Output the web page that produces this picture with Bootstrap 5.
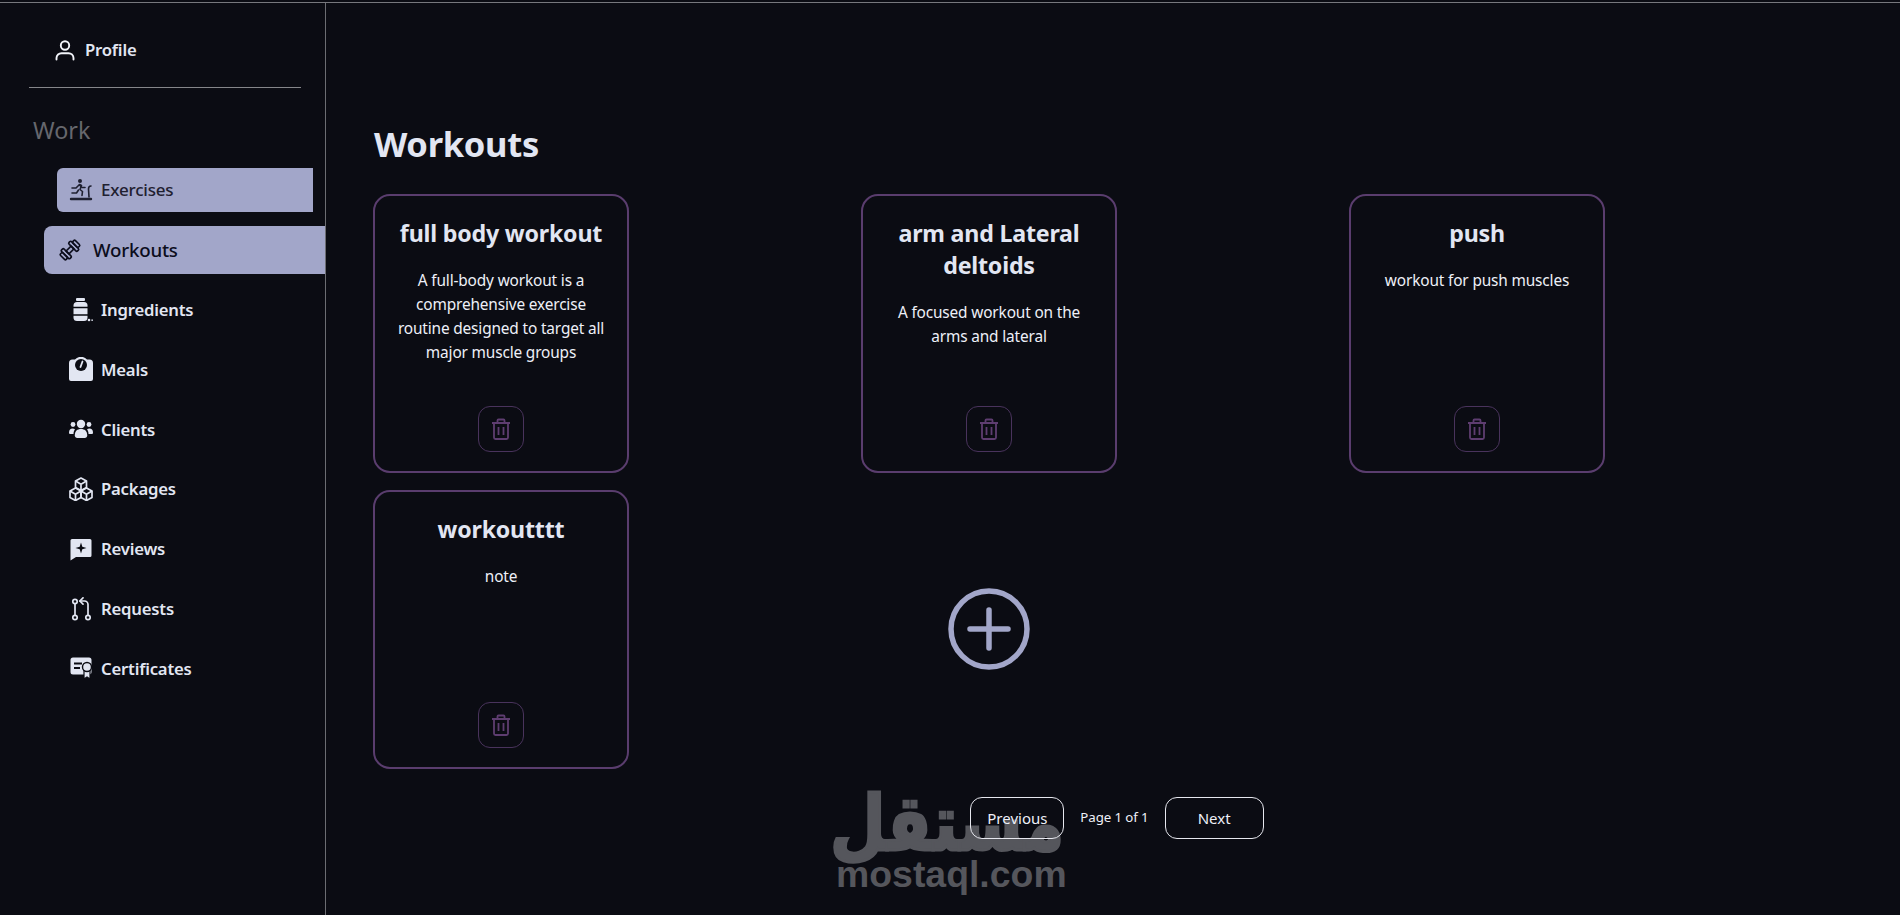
<!DOCTYPE html>
<html lang="en">
<head>
<meta charset="utf-8">
<title>Workouts</title>
<link rel="stylesheet" href="https://cdn.jsdelivr.net/npm/bootstrap@5.3.0/dist/css/bootstrap.min.css">
<style>
html,body{height:100%;}
body{background:#0b0c13;color:#e2e6f2;font-family:"Noto Sans","Open Sans",sans-serif;overflow:hidden;padding-top:3px;position:relative;}
.topline{position:absolute;top:2px;left:0;right:0;height:1px;background:#77787d;}
.shell{height:912px;position:relative;z-index:1;}
.side{width:326px;flex:none;border-right:1px solid #6c6d72;padding-top:25px;}
.side .nav-link{color:#e2e6f2;font-weight:600;font-size:16.7px;padding:0;display:flex;align-items:center;letter-spacing:-.2px;}
.prof{margin-left:53px;height:44px;gap:8px;}
.side hr{margin:15px 24px 0 29px;border-color:#85868a;opacity:1;}
.work-title{font-size:23.3px;color:#66676d;margin:0 0 0 33px;font-weight:400;line-height:30px;padding-top:27px;}
.side .nav{margin-top:21px;}
.item{height:48px;margin-bottom:11.8px;padding-left:69px!important;gap:8px;}
.ico{width:24px;height:24px;flex:none;display:block;}
.side .nav-link.hov{background:#a2a6c9;color:#1f2030;font-weight:500;font-size:17px;height:44px;margin:2px 12px 13.8px 57px;padding-left:12px!important;border-radius:6px 0 0 6px;}
.side .nav-link.act{background:#a2a6c9;color:#0c0d1c;font-weight:500;font-size:18.7px;margin-left:44px;padding-left:14px!important;border-radius:8px 0 0 8px;gap:11px;letter-spacing:-.2px;}
.workspace{flex:1;padding:0 39px 0 47px;min-width:0;}
.page-head{font-size:34.5px;font-weight:700;line-height:44px;margin:0 0 0 1px;padding-top:119px;letter-spacing:-.3px;}
.tiles{max-width:1464px;margin:0;margin-top:28px;}
.tile-col{padding:0;height:296px;}
.card.tile{width:256px;height:279px;background:transparent;border:2px solid #5a3d6e;border-radius:17px;color:#e2e6f2;text-align:center;}
.card.tile .card-body{padding:21px 22px 0;}
.card.tile .card-title{font-size:23.2px;font-weight:700;line-height:32px;margin:0 0 19.5px;letter-spacing:-.2px;}
.card.tile .card-text{font-size:15.4px;line-height:24px;margin:0;letter-spacing:-.15px;color:#eef0f8;}
.del-btn{width:46px;height:46px;padding:0;border:1px solid #49335c;border-radius:12px;background:transparent;position:absolute;left:103px;bottom:19px;display:flex;align-items:center;justify-content:center;}
.add-cell{width:256px;height:280px;margin-top:-1px;}
.pager{margin-top:11px;gap:16px;font-size:14.6px;}
.pager .btn{height:42px;border:1px solid #e6e7ee;border-radius:12px;color:#eef0f8;background:transparent;font-size:15px;padding:0;}
.pg-prev{width:94px;}
.pg-next{width:99px;}
.pg-label{font-size:13.3px;letter-spacing:-.1px;color:#eef0f8;}
.mark-logo{position:absolute;left:836px;top:778px;width:228px;color:#55565c;text-align:center;pointer-events:none;z-index:0;}
.mark-ar{font-family:"DejaVu Sans",sans-serif;font-weight:700;font-size:64px;line-height:84px;display:block;transform:translateY(8px) scaleY(1.2);transform-origin:50% 76%;-webkit-text-stroke:2.5px #55565c;}
.mark-en{font-family:"Liberation Sans",sans-serif;font-weight:700;font-size:37.4px;line-height:40px;display:block;margin-top:-8px;}
</style>
</head>
<body>
<div class="topline"></div>
<div class="shell d-flex">
  <aside class="side">
    <a class="nav-link prof" href="#">
      <svg class="ico" viewBox="0 0 24 24" fill="none" stroke="#f2f4fa" stroke-width="1.9" stroke-linecap="round"><circle cx="12" cy="7.5" r="4.2"/><path d="M3.5 21.5v-1.5c0-3 2.5-4.8 5-4.8h7c2.5 0 5 1.8 5 4.8v1.5"/></svg>
      <span>Profile</span>
    </a>
    <hr>
    <h5 class="work-title">Work</h5>
    <nav class="nav flex-column">
      <a class="nav-link item hov" href="#">
        <svg class="ico" viewBox="0 0 24 24" fill="none" stroke="#1f2030" stroke-width="1.6" stroke-linecap="round" stroke-linejoin="round"><circle cx="11" cy="3" r="2" fill="#1f2030" stroke="none"/><path d="M3 10h4l3.5-3.5 2 1-1.5 4 2.5 2-.5 4"/><path d="M10.5 7l2.5 2.5h3"/><path d="M9.500 12l-2 3H3"/><path d="M22 8c-2 0-2.500 1-2.500 3l.5 8"/><path d="M2 21h20" stroke-width="2.400"/></svg>
        <span>Exercises</span>
      </a>
      <a class="nav-link item act" href="#">
        <svg class="ico" viewBox="0 0 24 24" fill="none" stroke="#0c0d1c" stroke-width="1.600" stroke-linejoin="round"><g transform="rotate(-45 12 12)"><rect x="8.500" y="10" width="7" height="4"/><rect x="5" y="6" width="3.500" height="12" rx="1.200"/><rect x="15.500" y="6" width="3.500" height="12" rx="1.200"/><rect x="1.500" y="8" width="3.500" height="8" rx="1.200"/><rect x="19" y="8" width="3.500" height="8" rx="1.200"/></g></svg>
        <span>Workouts</span>
      </a>
      <a class="nav-link item" href="#">
        <svg class="ico" viewBox="0 0 24 24" fill="#e2e6f2"><rect x="7" y="0" width="9" height="3" rx="1"/><rect x="4.500" y="4" width="14" height="19" rx="3.500"/><path d="M4 9.500h15M4 17h15" stroke="#0b0c13" stroke-width="1.400"/><circle cx="20" cy="22" r="1.300"/><rect x="22.300" y="21.500" width="1.700" height="1.300"/></svg>
        <span>Ingredients</span>
      </a>
      <a class="nav-link item" href="#">
        <svg class="ico" viewBox="0 0 24 24"><path fill="#e2e6f2" d="M3.500 2.500H6A8 8 0 0 1 18 2.500h2.500a3.500 3.500 0 0 1 3.500 3.500V22a2 2 0 0 1-2 2H2a2 2 0 0 1-2-2V6a3.500 3.500 0 0 1 3.500-3.500Z"/><circle cx="12" cy="8" r="6" fill="#0b0c13"/><path d="M13.500 4.500 11.500 10" stroke="#e2e6f2" stroke-width="1.800" stroke-linecap="round"/></svg>
        <span>Meals</span>
      </a>
      <a class="nav-link item" href="#">
        <svg class="ico" viewBox="0 0 24 24" fill="#e2e6f2"><circle cx="12" cy="7" r="4.200"/><circle cx="4" cy="7.500" r="2.400"/><circle cx="20" cy="7.500" r="2.400"/><path d="M5.800 18.500c0-4.500 2.500-6.500 6.200-6.500s6.200 2 6.200 6.500c0 1.500-1 2.500-2.500 2.500H8.300c-1.500 0-2.500-1-2.500-2.500Z"/><path d="M0 15.500c0-2.500 1.500-4 3.500-4 1 0 1.800.2 2.500.8-1 1.300-1.500 2.800-1.500 4.700H1.500c-1 0-1.500-.5-1.500-1.500Z"/><path d="M24 15.500c0-2.500-1.500-4-3.500-4-1 0-1.800.2-2.500.8 1 1.300 1.500 2.800 1.500 4.700h3c1 0 1.500-.5 1.500-1.500Z"/></svg>
        <span>Clients</span>
      </a>
      <a class="nav-link item" href="#">
        <svg class="ico" viewBox="0 0 24 24" fill="none" stroke="#e2e6f2" stroke-width="1.700" stroke-linejoin="round"><path d="M12 1l5.500 3v6.500L12 13.500 6.500 10.500V4Z"/><path d="M6.500 4 12 7.200 17.500 4M12 7.200v6.300"/><path d="M6.500 11 12 14v6.500L6.500 23.500 1 20.500V14Z"/><path d="M1 14l5.500 3.200L12 14M6.500 17.200v6.300"/><path d="M17.500 11 23 14v6.500l-5.500 3-5.500-3V14Z"/><path d="M12 14l5.500 3.200L23 14M17.500 17.200v6.300"/></svg>
        <span>Packages</span>
      </a>
      <a class="nav-link item" href="#">
        <svg class="ico" viewBox="0 0 24 24"><path fill="#e2e6f2" d="M3 2h18a1.500 1.500 0 0 1 1.500 1.500v15a1.500 1.500 0 0 1-1.500 1.500H7l-5.500 3.500V3.500A1.500 1.500 0 0 1 3 2Z"/><path fill="#0b0c13" d="M12 5.500 13.300 9.700 17.500 11 13.300 12.300 12 16.500 10.700 12.300 6.500 11 10.700 9.700Z"/></svg>
        <span>Reviews</span>
      </a>
      <a class="nav-link item" href="#">
        <svg class="ico" viewBox="0 0 24 24" fill="none" stroke="#e2e6f2" stroke-width="1.700" stroke-linecap="round" stroke-linejoin="round"><circle cx="6" cy="4.500" r="2.200"/><circle cx="6" cy="20.500" r="2.200"/><circle cx="19" cy="20.500" r="2.200"/><path d="M6 6.700v11.600"/><path d="M19 18.300V7.500a3.500 3.500 0 0 0-3.500-3.500H11"/><path d="M14 .800 10.800 4 14 7.200"/></svg>
        <span>Requests</span>
      </a>
      <a class="nav-link item" href="#">
        <svg class="ico" viewBox="0 0 24 24"><path fill="#e2e6f2" d="M4 1.500h16a2.500 2.500 0 0 1 2.500 2.500v12a2.500 2.500 0 0 1-2.500 2.500H4A2.500 2.500 0 0 1 1.500 16V4A2.500 2.500 0 0 1 4 1.500Z"/><path d="M5 7.500h8M5 12h6" stroke="#0b0c13" stroke-width="2"/><path d="M15 14v9l3-2 3 2v-9" fill="#e2e6f2" stroke="#0b0c13" stroke-width="1.200"/><circle cx="18" cy="11" r="4.500" fill="#e2e6f2" stroke="#0b0c13" stroke-width="1.400"/></svg>
        <span>Certificates</span>
      </a>
    </nav>
  </aside>
  <main class="workspace">
    <h2 class="page-head">Workouts</h2>
    <div class="row row-cols-3 g-0 tiles">
      <div class="col tile-col"><div class="card tile"><div class="card-body"><h5 class="card-title">full body workout</h5><p class="card-text">A full-body workout is a comprehensive exercise routine designed to target all major muscle groups</p></div><button class="del-btn" type="button" aria-label="Delete"><svg width="20" height="22" viewBox="0 0 20 22" fill="none" stroke="#5e3d70" stroke-width="1.800"><path d="M1 5h18M6.500 5V2.500a1 1 0 0 1 1-1h5a1 1 0 0 1 1 1V5M3 5v14.500a1.500 1.500 0 0 0 1.500 1.500h11a1.500 1.500 0 0 0 1.500-1.500V5M7.500 9v8M12.500 9v8"/></svg></button></div></div>
      <div class="col tile-col"><div class="card tile"><div class="card-body"><h5 class="card-title">arm and Lateral deltoids</h5><p class="card-text">A focused workout on the arms and lateral</p></div><button class="del-btn" type="button" aria-label="Delete"><svg width="20" height="22" viewBox="0 0 20 22" fill="none" stroke="#5e3d70" stroke-width="1.800"><path d="M1 5h18M6.500 5V2.500a1 1 0 0 1 1-1h5a1 1 0 0 1 1 1V5M3 5v14.500a1.500 1.500 0 0 0 1.500 1.500h11a1.500 1.500 0 0 0 1.500-1.500V5M7.500 9v8M12.500 9v8"/></svg></button></div></div>
      <div class="col tile-col"><div class="card tile"><div class="card-body"><h5 class="card-title">push</h5><p class="card-text">workout for push muscles</p></div><button class="del-btn" type="button" aria-label="Delete"><svg width="20" height="22" viewBox="0 0 20 22" fill="none" stroke="#5e3d70" stroke-width="1.800"><path d="M1 5h18M6.500 5V2.500a1 1 0 0 1 1-1h5a1 1 0 0 1 1 1V5M3 5v14.500a1.500 1.500 0 0 0 1.500 1.500h11a1.500 1.500 0 0 0 1.500-1.500V5M7.500 9v8M12.500 9v8"/></svg></button></div></div>
      <div class="col tile-col"><div class="card tile"><div class="card-body"><h5 class="card-title">workoutttt</h5><p class="card-text">note</p></div><button class="del-btn" type="button" aria-label="Delete"><svg width="20" height="22" viewBox="0 0 20 22" fill="none" stroke="#5e3d70" stroke-width="1.800"><path d="M1 5h18M6.500 5V2.500a1 1 0 0 1 1-1h5a1 1 0 0 1 1 1V5M3 5v14.500a1.500 1.500 0 0 0 1.500 1.500h11a1.500 1.500 0 0 0 1.500-1.500V5M7.500 9v8M12.500 9v8"/></svg></button></div></div>
      <div class="col tile-col"><div class="add-cell d-flex align-items-center justify-content-center"><svg width="82" height="82" viewBox="0 0 82 82" fill="none" stroke="#a2a6c9" stroke-width="5.500" stroke-linecap="round"><circle cx="41" cy="41" r="38"/><path d="M41 22v38M22 41h38"/></svg></div></div>
    </div>
    <div class="pager d-flex align-items-center justify-content-center">
      <button class="btn pg-prev" type="button">Previous</button>
      <span class="pg-label">Page 1 of 1</span>
      <button class="btn pg-next" type="button">Next</button>
    </div>
  </main>
</div>
<div class="mark-logo"><span class="mark-ar" dir="rtl">مستقل</span><span class="mark-en">mostaql.com</span></div>
<script src="https://cdn.jsdelivr.net/npm/bootstrap@5.3.0/dist/js/bootstrap.bundle.min.js"></script>
</body>
</html>
